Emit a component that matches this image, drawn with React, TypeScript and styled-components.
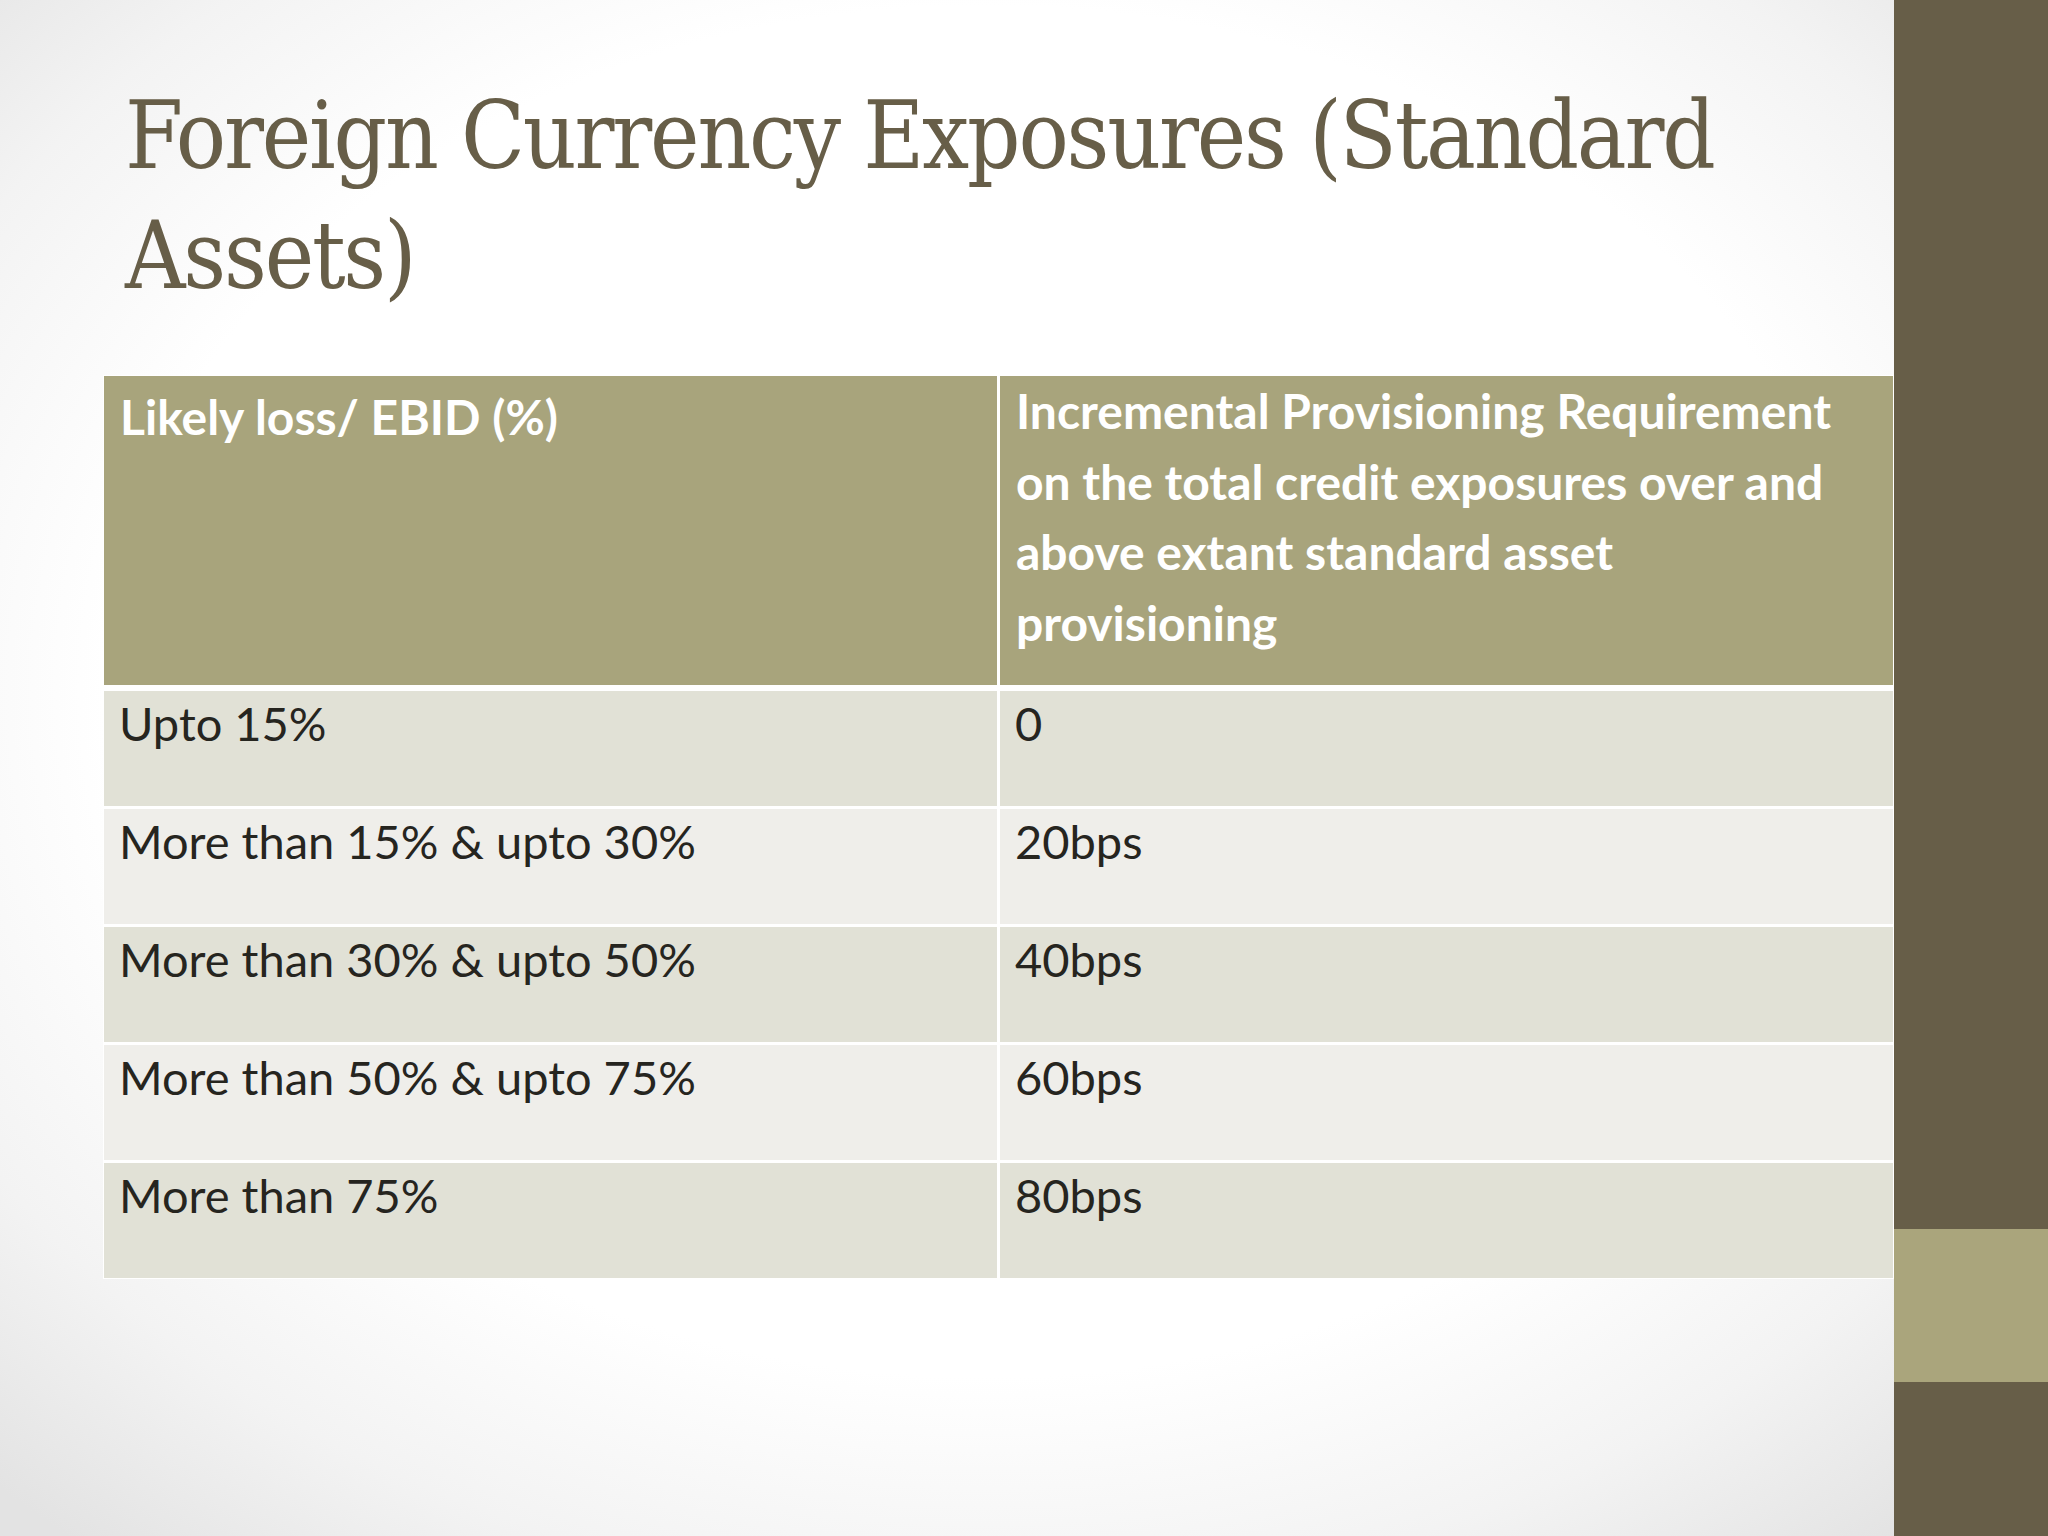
import React from "react";
import styled, { createGlobalStyle } from "styled-components";

const GlobalStyle = createGlobalStyle`
  html, body {
    margin: 0;
    padding: 0;
  }
  body {
    width: 2048px;
    height: 1536px;
    overflow: hidden;
  }
`;

const Slide = styled.div`
  display: flex;
  width: 2048px;
  height: 1536px;
`;

const Content = styled.main`
  width: 1894px;
  flex-shrink: 0;
  box-sizing: border-box;
  display: flex;
  flex-direction: column;
  padding: 76px 0 0 103px;
  background: radial-gradient(
    ellipse 75% 72% at 52% 45%,
    #ffffff 62%,
    #f3f3f3 82%,
    #e3e3e3 100%
  );
`;

const Title = styled.h1`
  margin: 0 0 0 22px;
  font-family: "DejaVu Serif", "Liberation Serif", serif;
  font-stretch: condensed;
  font-weight: normal;
  font-size: 93px;
  line-height: 120px;
  color: #675e48;
  letter-spacing: -2.2px;
  width: 1700px;
`;

const Grid = styled.div`
  margin-top: 59px;
  display: grid;
  grid-template-columns: 1fr 1fr;
  gap: 3px;
  background: #ffffff;
  border: 1px solid #ffffff;
  font-family: Lato, "Open Sans", sans-serif;
`;

const HeadCell = styled.div<{ $drop?: number }>`
  background: #a8a47c;
  color: #ffffff;
  font-weight: bold;
  font-size: 48px;
  line-height: 70.5px;
  height: 309px;
  box-sizing: border-box;
  padding: ${(p) => p.$drop ?? 0}px 20px 0 16px;
  margin-bottom: 3px;
`;

const Cell = styled.div<{ $odd: boolean }>`
  background: ${(p) => (p.$odd ? "#e1e1d6" : "#efeeea")};
  color: #26251f;
  font-size: 47px;
  height: 115px;
  box-sizing: border-box;
  padding: 2px 18px 0 15px;
  line-height: 60px;
`;

const Sidebar = styled.aside`
  flex: 1;
  display: flex;
  flex-direction: column;
  background: #675e48;
`;

const SideSpacer = styled.div`
  height: 1229px;
`;

const SideAccent = styled.div`
  height: 153px;
  background: #aaa57c;
`;

const rows: [string, string][] = [
  ["Upto 15%", "0"],
  ["More than 15% & upto 30%", "20bps"],
  ["More than 30% & upto 50%", "40bps"],
  ["More than 50% & upto 75%", "60bps"],
  ["More than 75%", "80bps"],
];

export default function App() {
  return (
    <>
      <GlobalStyle />
      <Slide>
        <Content>
          <Title>Foreign Currency Exposures (Standard Assets)</Title>
          <Grid>
            <HeadCell $drop={6}>Likely loss/ EBID (%)</HeadCell>
            <HeadCell>
              Incremental Provisioning Requirement on the total credit
              exposures over and above extant standard asset provisioning
            </HeadCell>
            {rows.map(([a, b], i) => (
              <React.Fragment key={a}>
                <Cell $odd={i % 2 === 0}>{a}</Cell>
                <Cell $odd={i % 2 === 0}>{b}</Cell>
              </React.Fragment>
            ))}
          </Grid>
        </Content>
        <Sidebar>
          <SideSpacer />
          <SideAccent />
        </Sidebar>
      </Slide>
    </>
  );
}
